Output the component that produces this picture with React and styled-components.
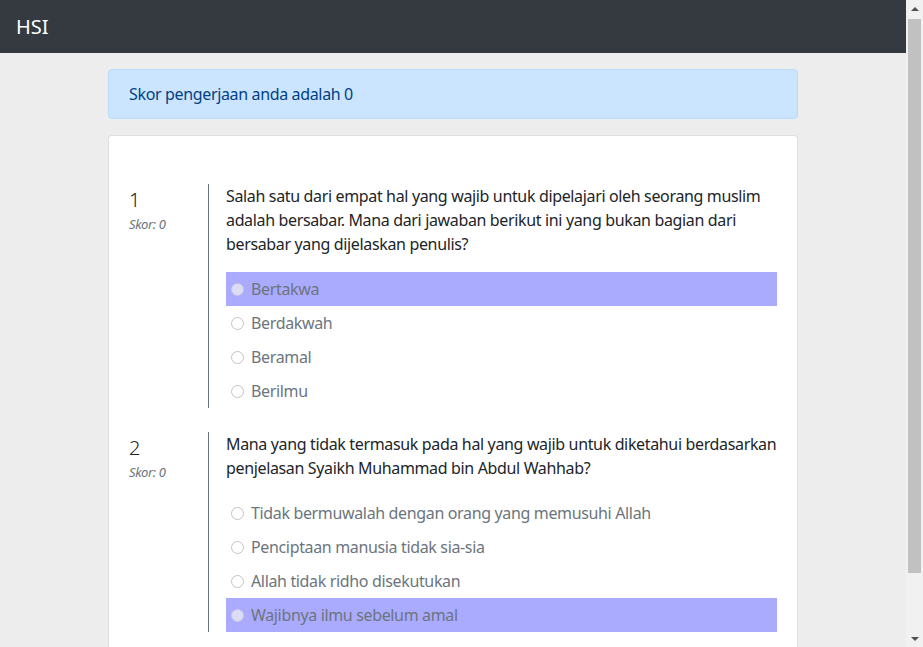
import styled, { createGlobalStyle } from 'styled-components'

const Global = createGlobalStyle`
  html, body {
    margin: 0;
    padding: 0;
  }
  body {
    width: calc(100% - 17px);
    background: #ededed;
    font-family: "Noto Sans", "Open Sans", sans-serif;
    font-size: 16px;
    line-height: 24px;
    letter-spacing: -0.35px;
    color: #212529;
  }
`

// fake classic scrollbar, the reference shows one on the right edge
const Scrollbar = styled.div`
  position: fixed;
  top: 0;
  right: 0;
  width: 17px;
  height: 100vh;
  background: #f1f1f1;
  display: flex;
  flex-direction: column;
  align-items: center;
`

const Arrow = styled.div`
  height: 17px;
  width: 17px;
  flex-shrink: 0;
  display: flex;
  align-items: center;
  justify-content: center;
  &::before {
    content: '';
    border-left: 4px solid transparent;
    border-right: 4px solid transparent;
    ${({ down }) =>
      down ? 'border-top: 4px solid #505050;' : 'border-bottom: 4px solid #505050;'}
  }
`

const Track = styled.div`
  flex: 1;
  width: 100%;
  padding: 2px 2px 0;
  box-sizing: border-box;
`

const Thumb = styled.div`
  height: 554px;
  background: #c1c1c1;
`

const Navbar = styled.nav`
  height: 53px;
  background: #343a40;
  display: flex;
  align-items: center;
  padding: 0 16px;
`

const Brand = styled.span`
  color: #fff;
  font-size: 20px;
  letter-spacing: 0;
`

const Container = styled.main`
  width: 690px;
  margin: 16px auto 36px;
  display: flex;
  flex-direction: column;
  gap: 16px;
`

const Alert = styled.div`
  background: #cce5ff;
  border: 1px solid #b8daff;
  border-radius: 4px;
  color: #004085;
  padding: 12px 20px;
`

const Card = styled.section`
  background: #fff;
  border: 1px solid rgba(0, 0, 0, 0.125);
  border-radius: 4px;
  padding: 48px 20px 48px 20px;
  display: flex;
  flex-direction: column;
  gap: 24px;
`

const Question = styled.div`
  display: flex;
`

const Meta = styled.div`
  width: 79px;
  padding-top: 4px;
`

const Number = styled.div`
  font-size: 20px;
  line-height: 24px;
  font-weight: 300;
`

const Score = styled.div`
  font-size: 13px;
  font-style: italic;
  color: #6c757d;
  line-height: 16px;
  margin-top: 4px;
`

const Body = styled.div`
  flex: 1;
  border-left: 1px solid #6c757d;
  padding-left: 17px;
`

const Text = styled.p`
  margin: 0 0 16px;
`

const Option = styled.label`
  display: flex;
  align-items: center;
  height: 34px;
  padding-left: 5px;
  color: #6c757d;
  background: ${({ selected }) => (selected ? '#aaaaff' : 'transparent')};
`

const Radio = styled.span`
  width: 11px;
  height: 11px;
  border-radius: 50%;
  border: 1px solid ${({ selected }) => (selected ? '#c8c8e8' : '#c4c4c4')};
  background: ${({ selected }) => (selected ? '#dcdcf4' : '#fff')};
  margin-right: 7px;
  flex-shrink: 0;
`

const questions = [
  {
    no: 1,
    text: 'Salah satu dari empat hal yang wajib untuk dipelajari oleh seorang muslim adalah bersabar. Mana dari jawaban berikut ini yang bukan bagian dari bersabar yang dijelaskan penulis?',
    options: ['Bertakwa', 'Berdakwah', 'Beramal', 'Berilmu'],
    selected: 0,
  },
  {
    no: 2,
    text: 'Mana yang tidak termasuk pada hal yang wajib untuk diketahui berdasarkan penjelasan Syaikh Muhammad bin Abdul Wahhab?',
    options: [
      'Tidak bermuwalah dengan orang yang memusuhi Allah',
      'Penciptaan manusia tidak sia-sia',
      'Allah tidak ridho disekutukan',
      'Wajibnya ilmu sebelum amal',
    ],
    selected: 3,
  },
]

function App() {
  return (
    <>
      <Global />
      <Navbar>
        <Brand>HSI</Brand>
      </Navbar>
      <Container>
        <Alert>Skor pengerjaan anda adalah 0</Alert>
        <Card>
          {questions.map((q) => (
            <Question key={q.no}>
              <Meta>
                <Number>{q.no}</Number>
                <Score>Skor: 0</Score>
              </Meta>
              <Body>
                <Text>{q.text}</Text>
                {q.options.map((o, i) => (
                  <Option key={o} selected={i === q.selected}>
                    <Radio selected={i === q.selected} />
                    {o}
                  </Option>
                ))}
              </Body>
            </Question>
          ))}
        </Card>
      </Container>
      <Scrollbar>
        <Arrow />
        <Track>
          <Thumb />
        </Track>
        <Arrow down />
      </Scrollbar>
    </>
  )
}

export default App
